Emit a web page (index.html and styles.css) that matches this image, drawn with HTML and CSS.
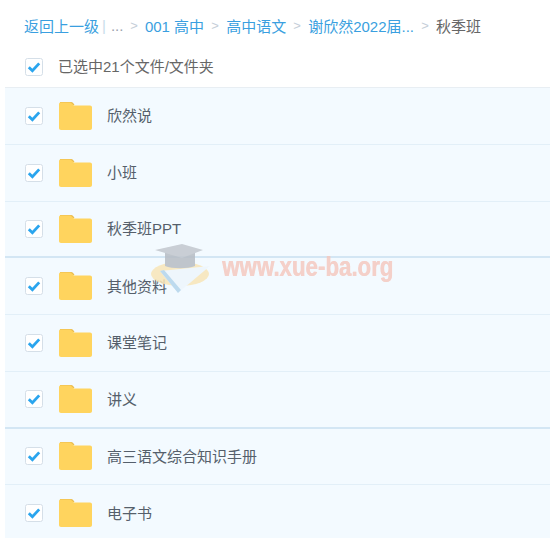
FILE: index.html
```html
<!DOCTYPE html>
<html lang="zh">
<head>
<meta charset="utf-8">
<title>秋季班</title>
<link rel="stylesheet" href="styles.css">
</head>
<body>
<svg class="defs" width="0" height="0" aria-hidden="true">
  <symbol id="check" viewBox="0 0 18 18">
    <rect x="0.5" y="0.5" width="17" height="17" rx="2" fill="#fff" stroke="#d5dfe8"/>
    <path d="M3.8 9.2 7.4 12.8 14.2 5.4" fill="none" stroke="#2aa5ee" stroke-width="2.8"/>
  </symbol>
  <symbol id="folder" viewBox="0 0 33 28">
    <path d="M1.500 0H12c1.500 0 2.500 1 3.500 3H1V1.500C1 .6 .6 0 1.500 0Z" fill="#eabb4d"/>
    <path d="M0 2C0 1 .8 .5 2 .5h9.500L15 3.500h16c1.200 0 2 .8 2 2V26c0 1.200-.8 2-2 2H2c-1.200 0-2-.8-2-2Z" fill="#ffd45e"/>
  </symbol>
</svg>
<main class="page">
  <nav class="crumbs">
    <a class="link">返回上一级</a><span class="bar">|</span><span class="dots">...</span><span class="sep">&gt;</span><a class="link">001 高中</a><span class="sep">&gt;</span><a class="link">高中语文</a><span class="sep">&gt;</span><a class="link">谢欣然2022届...</a><span class="sep">&gt;</span><span class="current">秋季班</span>
  </nav>
  <div class="select-all">
    <svg class="checkbox"><use href="#check"/></svg>
    <span>已选中21个文件/文件夹</span>
  </div>
  <ul class="files">
    <li class="row"><svg class="checkbox"><use href="#check"/></svg><svg class="folder"><use href="#folder"/></svg><span>欣然说</span></li>
    <li class="row"><svg class="checkbox"><use href="#check"/></svg><svg class="folder"><use href="#folder"/></svg><span>小班</span></li>
    <li class="row row-strong"><svg class="checkbox"><use href="#check"/></svg><svg class="folder"><use href="#folder"/></svg><span>秋季班PPT</span></li>
    <li class="row"><svg class="checkbox"><use href="#check"/></svg><svg class="folder"><use href="#folder"/></svg><span>其他资料</span></li>
    <li class="row"><svg class="checkbox"><use href="#check"/></svg><svg class="folder"><use href="#folder"/></svg><span>课堂笔记</span></li>
    <li class="row row-strong"><svg class="checkbox"><use href="#check"/></svg><svg class="folder"><use href="#folder"/></svg><span>讲义</span></li>
    <li class="row"><svg class="checkbox"><use href="#check"/></svg><svg class="folder"><use href="#folder"/></svg><span>高三语文综合知识手册</span></li>
    <li class="row"><svg class="checkbox"><use href="#check"/></svg><svg class="folder"><use href="#folder"/></svg><span>电子书</span></li>
  </ul>
</main>
<div class="watermark">
  <svg class="wm-logo" viewBox="0 0 62 56" aria-hidden="true">
    <ellipse cx="30" cy="33" rx="29" ry="12" fill="#f8e6b8"/>
    <path d="M10 30 60 25 28 52Z" fill="#eef6fc"/>
    <path d="M10 30 28 52 31 49 14 29Z" fill="#b4d5ec"/>
    <path d="M15 10H45V25C38 28 22 28 15 25Z" fill="#b6bcc4"/>
    <path d="M5 9 32 3 53 9 32 17Z" fill="#c2c7ce"/>
  </svg>
  <span class="wm-text">www.xue-ba.org</span>
</div>
</body>
</html>
```
FILE: styles.css
```css
* { box-sizing: border-box; }
html, body { margin: 0; padding: 0; }
body {
  width: 550px;
  height: 538px;
  overflow: hidden;
  background: #fff;
  font-family: "Liberation Sans", "Noto Sans CJK SC", sans-serif;
  font-size: 15px;
  position: relative;
}
.defs { position: absolute; }
.page { padding-left: 5px; }
.crumbs {
  height: 43px;
  padding: 8px 0 0 19px;
  white-space: nowrap;
  display: flex;
  align-items: center;
}
.link { color: #3a9fe0; }
.bar { color: #c9dcea; margin: 0 5px 0 3px; }
.dots { color: #9aa3ad; width: 12px; overflow: hidden; }
.sep { color: #c5ced8; width: 8px; margin: 0 7px; font-size: 13px; text-align: center; }
.current { color: #666; }
.select-all {
  height: 45px;
  display: flex;
  align-items: center;
  padding: 3px 0 0 20px;
  color: #666;
  border-bottom: 1px solid #e8eef3;
}
.select-all span { margin-left: 15px; padding-bottom: 2px; }
.files {
  list-style: none;
  margin: 0;
  padding: 0;
  background: #f3faff;
}
.row {
  height: 56.75px;
  display: flex;
  align-items: center;
  padding: 0 0 0 20px;
  color: #555f6b;
  border-bottom: 1px solid #e2eff8;
}
.row-strong { border-bottom: 2px solid #d3e6f4; }
.checkbox { width: 18px; height: 18px; flex: none; }
.folder { width: 33px; height: 28px; margin-left: 16px; flex: none; }
.row span { margin-left: 15px; padding-bottom: 2px; }
.watermark {
  position: absolute;
  left: 150px;
  top: 241px;
  display: flex;
  align-items: center;
  opacity: .85;
  filter: blur(.4px);
}
.wm-logo { width: 62px; height: 56px; }
.wm-text {
  margin-left: 10px;
  padding-bottom: 4px;
  font-family: "Liberation Sans", sans-serif;
  font-weight: 700;
  font-size: 27px;
  color: #f5c9c0;
  text-shadow: .6px 0 0 #f5c9c0;
  transform: scaleX(.825);
  transform-origin: left center;
}
```
